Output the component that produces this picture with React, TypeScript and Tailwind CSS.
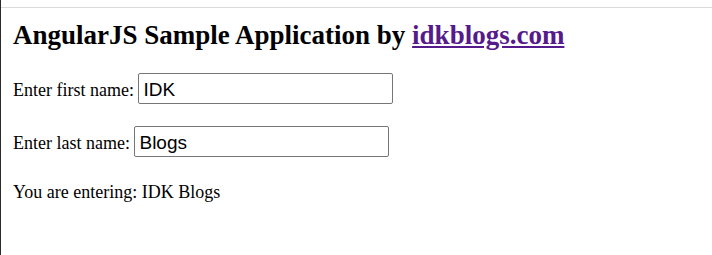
import { useState } from "react";

export default function App() {
  const [first, setFirst] = useState("IDK");
  const [last, setLast] = useState("Blogs");

  return (
    <div className="min-h-[255px] border-l border-[#2b2b2b] bg-white text-black">
      <div className="h-[8px] border-b border-[#dadada]" />
      <div className="pl-[12px] font-['Liberation_Serif','Times_New_Roman',serif] text-[18px]">
        <h2 className="mt-[12px] text-[27px] font-bold leading-[31px]">
          AngularJS Sample Application by{" "}
          <a href="#" className="text-[#551a8b] underline">
            idkblogs.com
          </a>
        </h2>

        <div className="mt-[22px]">
          Enter first name:{" "}
          <input
            type="text"
            value={first}
            onChange={(e) => setFirst(e.target.value)}
            className="h-[31px] w-[255px] rounded-[2px] border border-[#767676] pt-[3px] pr-[2px] pb-0 pl-[4px] align-baseline font-['Liberation_Sans',Arial,sans-serif] text-[19px] outline-none"
          />
        </div>

        <div className="mt-[22px]">
          Enter last name:{" "}
          <input
            type="text"
            value={last}
            onChange={(e) => setLast(e.target.value)}
            className="h-[31px] w-[255px] rounded-[2px] border border-[#767676] pt-[3px] pr-[2px] pb-0 pl-[4px] align-baseline font-['Liberation_Sans',Arial,sans-serif] text-[19px] outline-none"
          />
        </div>

        <p className="mt-[22px]">
          You are entering: {first} {last}
        </p>
      </div>
    </div>
  );
}
